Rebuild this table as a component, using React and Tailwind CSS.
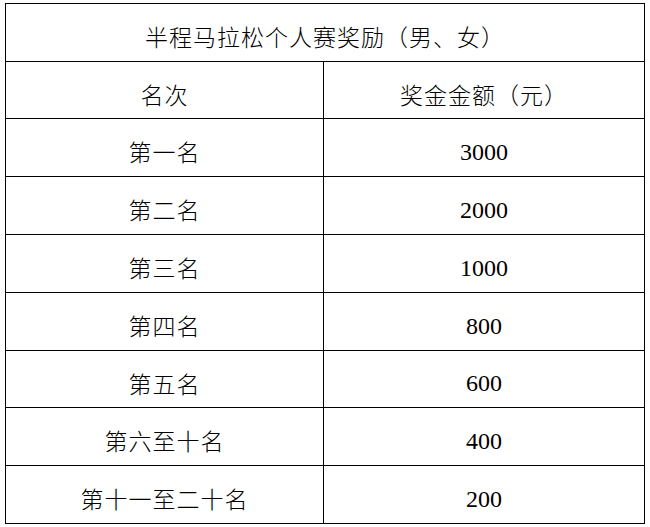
export default function App() {
  const rows = [
    ["第一名", "3000", "h-[58px]"],
    ["第二名", "2000", "h-[58px]"],
    ["第三名", "1000", "h-[58px]"],
    ["第四名", "800", "h-[58px]"],
    ["第五名", "600", "h-[57px]"],
    ["第六至十名", "400", "h-[58px]"],
    ["第十一至二十名", "200", "h-[58px]"],
  ];
  const cjk = "font-['Noto_Sans_CJK_SC',sans-serif] font-light";
  const num = "font-['Liberation_Serif','Noto_Sans_CJK_SC',serif]";
  return (
    <div className="w-[650px] h-[527px] bg-white pl-[5px] pt-[3px] text-black">
      <div className="w-[640px] border border-black flex flex-col">
        <div className={`h-[57px] flex items-center justify-center pt-[8px] text-[23px] tracking-[1px] ${cjk}`}>
          半程马拉松个人赛奖励（男、女）
        </div>
        <div className="h-[57px] border-t border-black grid grid-cols-[317px_321px]">
          <div className={`flex items-center justify-center pt-[8px] text-[23px] tracking-[1px] ${cjk}`}>名次</div>
          <div className={`border-l border-black flex items-center justify-center pt-[8px] text-[23px] tracking-[1px] ${cjk}`}>奖金金额（元）</div>
        </div>
        {rows.map(([a, b, h]) => (
          <div key={a} className={`${h} border-t border-black grid grid-cols-[317px_321px]`}>
            <div className={`flex items-center justify-center pt-[8px] text-[23px] tracking-[1px] ${cjk}`}>{a}</div>
            <div className={`border-l border-black flex items-center justify-center pt-[8px] text-[24px] ${num}`}>{b}</div>
          </div>
        ))}
      </div>
    </div>
  );
}
